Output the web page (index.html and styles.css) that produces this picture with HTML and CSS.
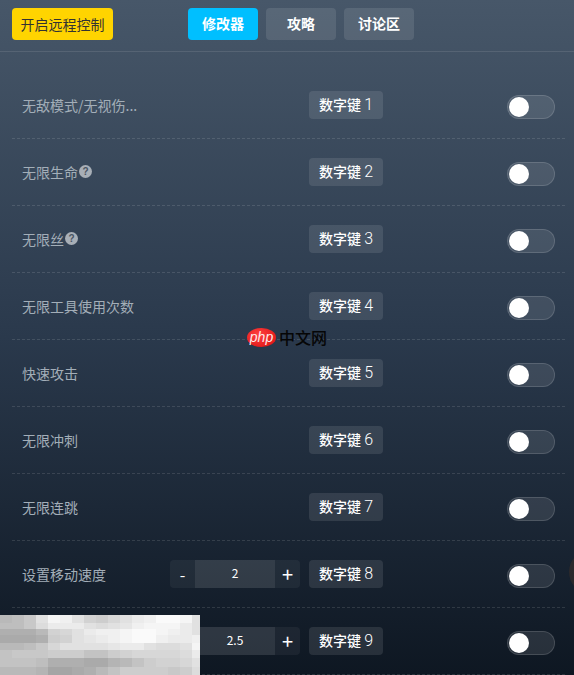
FILE: index.html
```html
<!DOCTYPE html>
<html lang="zh-CN">
  <head>
    <meta charset="UTF-8" />
    <meta name="viewport" content="width=device-width, initial-scale=1.0" />
    <title>修改器</title>
    <link rel="stylesheet" href="styles.css">
  </head>
  <body>
    <div id="page">
      <header class="top-bar">
        <button class="remote-btn">开启远程控制</button>
        <nav class="tabs">
          <a class="tab active">修改器</a>
          <a class="tab">攻略</a>
          <a class="tab">讨论区</a>
        </nav>
      </header>

      <div class="cheat-list">
        <div class="cheat-row">
          <span class="cheat-name">无敌模式/无视伤...</span>
          <span class="hotkey">数字键 <b>1</b></span>
          <span class="switch"><i></i></span>
        </div>
        <div class="cheat-row">
          <span class="cheat-name">无限生命<i class="help">?</i></span>
          <span class="hotkey">数字键 <b>2</b></span>
          <span class="switch"><i></i></span>
        </div>
        <div class="cheat-row">
          <span class="cheat-name">无限丝<i class="help">?</i></span>
          <span class="hotkey">数字键 <b>3</b></span>
          <span class="switch"><i></i></span>
        </div>
        <div class="cheat-row">
          <span class="cheat-name">无限工具使用次数</span>
          <span class="hotkey">数字键 <b>4</b></span>
          <span class="switch"><i></i></span>
        </div>
        <div class="cheat-row">
          <span class="cheat-name">快速攻击</span>
          <span class="hotkey">数字键 <b>5</b></span>
          <span class="switch"><i></i></span>
        </div>
        <div class="cheat-row">
          <span class="cheat-name">无限冲刺</span>
          <span class="hotkey">数字键 <b>6</b></span>
          <span class="switch"><i></i></span>
        </div>
        <div class="cheat-row">
          <span class="cheat-name">无限连跳</span>
          <span class="hotkey">数字键 <b>7</b></span>
          <span class="switch"><i></i></span>
        </div>
        <div class="cheat-row">
          <span class="cheat-name">设置移动速度</span>
          <div class="stepper">
            <span class="step">-</span>
            <span class="step-value">2</span>
            <span class="step plus">+</span>
          </div>
          <span class="hotkey">数字键 <b>8</b></span>
          <span class="switch"><i></i></span>
        </div>
        <div class="cheat-row">
          <span class="cheat-name"></span>
          <div class="stepper">
            <span class="step">-</span>
            <span class="step-value">2.5</span>
            <span class="step plus">+</span>
          </div>
          <span class="hotkey">数字键 <b>9</b></span>
          <span class="switch"><i></i></span>
        </div>
      </div>

      <!-- things lying over the page -->
      <div class="watermark"><span class="php-badge">php</span><span class="watermark-text">中文网</span></div>
      <div class="edge-blob"></div>
      <svg class="mosaic" width="200" height="60" viewBox="0 0 200 60" shape-rendering="crispEdges">
        <g transform="translate(0 0)">
          <rect x="0" width="12" height="8" fill="#b9b9b9"/><rect x="12" width="12" height="8" fill="#bebebe"/><rect x="24" width="12" height="8" fill="#c8c8c8"/><rect x="36" width="12" height="8" fill="#e1e1e1"/><rect x="48" width="12" height="8" fill="#f5f5f5"/><rect x="60" width="12" height="8" fill="#f0f0f0"/><rect x="72" width="12" height="8" fill="#e1e1e1"/><rect x="84" width="12" height="8" fill="#d2d2d2"/><rect x="96" width="12" height="8" fill="#cdcdcd"/><rect x="108" width="12" height="8" fill="#d7d7d7"/><rect x="120" width="12" height="8" fill="#e1e1e1"/><rect x="132" width="12" height="8" fill="#ebebeb"/><rect x="144" width="12" height="8" fill="#f0f0f0"/><rect x="156" width="12" height="8" fill="#fafafa"/><rect x="168" width="12" height="8" fill="#fafafa"/><rect x="180" width="12" height="8" fill="#f5f5f5"/><rect x="192" width="8" height="8" fill="#e1e1e1"/>
        </g>
        <g transform="translate(0 8)">
          <rect x="0" width="12" height="6" fill="#bebebe"/><rect x="12" width="12" height="6" fill="#bebebe"/><rect x="24" width="12" height="6" fill="#c8c8c8"/><rect x="36" width="12" height="6" fill="#dcdcdc"/><rect x="48" width="12" height="6" fill="#ebebeb"/><rect x="60" width="12" height="6" fill="#ebebeb"/><rect x="72" width="12" height="6" fill="#ebebeb"/><rect x="84" width="12" height="6" fill="#e1e1e1"/><rect x="96" width="12" height="6" fill="#dcdcdc"/><rect x="108" width="12" height="6" fill="#e1e1e1"/><rect x="120" width="12" height="6" fill="#e6e6e6"/><rect x="132" width="12" height="6" fill="#f0f0f0"/><rect x="144" width="12" height="6" fill="#f5f5f5"/><rect x="156" width="12" height="6" fill="#f5f5f5"/><rect x="168" width="12" height="6" fill="#f5f5f5"/><rect x="180" width="12" height="6" fill="#ebebeb"/><rect x="192" width="8" height="6" fill="#e1e1e1"/>
        </g>
        <g transform="translate(0 14)">
          <rect x="0" width="12" height="6" fill="#afafaf"/><rect x="12" width="12" height="6" fill="#afafaf"/><rect x="24" width="12" height="6" fill="#afafaf"/><rect x="36" width="12" height="6" fill="#b9b9b9"/><rect x="48" width="12" height="6" fill="#d2d2d2"/><rect x="60" width="12" height="6" fill="#d7d7d7"/><rect x="72" width="12" height="6" fill="#e1e1e1"/><rect x="84" width="12" height="6" fill="#ebebeb"/><rect x="96" width="12" height="6" fill="#f0f0f0"/><rect x="108" width="12" height="6" fill="#f0f0f0"/><rect x="120" width="12" height="6" fill="#f5f5f5"/><rect x="132" width="12" height="6" fill="#fafafa"/><rect x="144" width="12" height="6" fill="#fafafa"/><rect x="156" width="12" height="6" fill="#f5f5f5"/><rect x="168" width="12" height="6" fill="#f0f0f0"/><rect x="180" width="12" height="6" fill="#ebebeb"/><rect x="192" width="8" height="6" fill="#e1e1e1"/>
        </g>
        <g transform="translate(0 20)">
          <rect x="0" width="12" height="8" fill="#aaaaaa"/><rect x="12" width="12" height="8" fill="#aaaaaa"/><rect x="24" width="12" height="8" fill="#aaaaaa"/><rect x="36" width="12" height="8" fill="#afafaf"/><rect x="48" width="12" height="8" fill="#cdcdcd"/><rect x="60" width="12" height="8" fill="#d2d2d2"/><rect x="72" width="12" height="8" fill="#e1e1e1"/><rect x="84" width="12" height="8" fill="#e6e6e6"/><rect x="96" width="12" height="8" fill="#ebebeb"/><rect x="108" width="12" height="8" fill="#f0f0f0"/><rect x="120" width="12" height="8" fill="#f5f5f5"/><rect x="132" width="12" height="8" fill="#fafafa"/><rect x="144" width="12" height="8" fill="#fafafa"/><rect x="156" width="12" height="8" fill="#f0f0f0"/><rect x="168" width="12" height="8" fill="#ebebeb"/><rect x="180" width="12" height="8" fill="#ebebeb"/><rect x="192" width="8" height="8" fill="#f0f0f0"/>
        </g>
        <g transform="translate(0 28)">
          <rect x="0" width="12" height="7" fill="#b9b9b9"/><rect x="12" width="12" height="7" fill="#b9b9b9"/><rect x="24" width="12" height="7" fill="#bebebe"/><rect x="36" width="12" height="7" fill="#c8c8c8"/><rect x="48" width="12" height="7" fill="#d7d7d7"/><rect x="60" width="12" height="7" fill="#e1e1e1"/><rect x="72" width="12" height="7" fill="#e1e1e1"/><rect x="84" width="12" height="7" fill="#e1e1e1"/><rect x="96" width="12" height="7" fill="#e1e1e1"/><rect x="108" width="12" height="7" fill="#e6e6e6"/><rect x="120" width="12" height="7" fill="#ebebeb"/><rect x="132" width="12" height="7" fill="#ebebeb"/><rect x="144" width="12" height="7" fill="#e1e1e1"/><rect x="156" width="12" height="7" fill="#dcdcdc"/><rect x="168" width="12" height="7" fill="#dcdcdc"/><rect x="180" width="12" height="7" fill="#e1e1e1"/><rect x="192" width="8" height="7" fill="#f5f5f5"/>
        </g>
        <g transform="translate(0 35)">
          <rect x="0" width="12" height="8" fill="#c3c3c3"/><rect x="12" width="12" height="8" fill="#c8c8c8"/><rect x="24" width="12" height="8" fill="#c8c8c8"/><rect x="36" width="12" height="8" fill="#c8c8c8"/><rect x="48" width="12" height="8" fill="#cdcdcd"/><rect x="60" width="12" height="8" fill="#cdcdcd"/><rect x="72" width="12" height="8" fill="#cdcdcd"/><rect x="84" width="12" height="8" fill="#c3c3c3"/><rect x="96" width="12" height="8" fill="#c3c3c3"/><rect x="108" width="12" height="8" fill="#cdcdcd"/><rect x="120" width="12" height="8" fill="#d2d2d2"/><rect x="132" width="12" height="8" fill="#d7d7d7"/><rect x="144" width="12" height="8" fill="#d7d7d7"/><rect x="156" width="12" height="8" fill="#d7d7d7"/><rect x="168" width="12" height="8" fill="#d7d7d7"/><rect x="180" width="12" height="8" fill="#dcdcdc"/><rect x="192" width="8" height="8" fill="#ebebeb"/>
        </g>
        <g transform="translate(0 43)">
          <rect x="0" width="12" height="9" fill="#c3c3c3"/><rect x="12" width="12" height="9" fill="#c3c3c3"/><rect x="24" width="12" height="9" fill="#c3c3c3"/><rect x="36" width="12" height="9" fill="#bebebe"/><rect x="48" width="12" height="9" fill="#afafaf"/><rect x="60" width="12" height="9" fill="#afafaf"/><rect x="72" width="12" height="9" fill="#afafaf"/><rect x="84" width="12" height="9" fill="#aaaaaa"/><rect x="96" width="12" height="9" fill="#aaaaaa"/><rect x="108" width="12" height="9" fill="#b4b4b4"/><rect x="120" width="12" height="9" fill="#b9b9b9"/><rect x="132" width="12" height="9" fill="#c3c3c3"/><rect x="144" width="12" height="9" fill="#cdcdcd"/><rect x="156" width="12" height="9" fill="#d2d2d2"/><rect x="168" width="12" height="9" fill="#d2d2d2"/><rect x="180" width="12" height="9" fill="#d7d7d7"/><rect x="192" width="8" height="9" fill="#e1e1e1"/>
        </g>
        <g transform="translate(0 52)">
          <rect x="0" width="12" height="8" fill="#b9b9b9"/><rect x="12" width="12" height="8" fill="#b9b9b9"/><rect x="24" width="12" height="8" fill="#b9b9b9"/><rect x="36" width="12" height="8" fill="#b4b4b4"/><rect x="48" width="12" height="8" fill="#a5a5a5"/><rect x="60" width="12" height="8" fill="#a5a5a5"/><rect x="72" width="12" height="8" fill="#aaaaaa"/><rect x="84" width="12" height="8" fill="#afafaf"/><rect x="96" width="12" height="8" fill="#b9b9b9"/><rect x="108" width="12" height="8" fill="#c3c3c3"/><rect x="120" width="12" height="8" fill="#cdcdcd"/><rect x="132" width="12" height="8" fill="#cdcdcd"/><rect x="144" width="12" height="8" fill="#cdcdcd"/><rect x="156" width="12" height="8" fill="#cdcdcd"/><rect x="168" width="12" height="8" fill="#c8c8c8"/><rect x="180" width="12" height="8" fill="#cdcdcd"/><rect x="192" width="8" height="8" fill="#dcdcdc"/>
        </g>
      </svg>
    </div>
  </body>
</html>
```

FILE: styles.css
```css
html,
body {
  margin: 0;
  padding: 0;
}
body {
  font: normal 14px/20px "Noto Sans CJK SC", "Liberation Sans", sans-serif;
  color: #fff;
}
#page {
  position: relative;
  width: 574px;
  height: 675px;
  overflow: hidden;
  background: linear-gradient(180deg, #475769 0%, #2a394c 50%, #0e1722 100%);
}

/* Top bar */
.top-bar {
  display: flex;
  height: 52px;
  padding: 8px 12px 0;
  box-sizing: border-box;
  border-bottom: 1px solid rgba(255, 255, 255, 0.1);
}
.remote-btn {
  width: 101px;
  height: 32px;
  padding: 0;
  border: 0;
  border-radius: 4px;
  background: #ffd400;
  color: #333;
  font: inherit;
}
.tabs {
  display: flex;
  gap: 8px;
  margin-left: 75px;
}
.tab {
  width: 70px;
  height: 32px;
  border-radius: 4px;
  background: rgba(255, 255, 255, 0.1);
  font-weight: bold;
  line-height: 31px;
  text-align: center;
}
.tab.active {
  background: #00bfff;
}

/* List */
.cheat-list {
  margin: 20px 9px 0 12px;
}
.cheat-row {
  display: grid;
  grid-template-columns: 148px 139px 74px 1fr;
  align-items: center;
  height: 67px;
  box-sizing: border-box;
  padding: 0 10px;
  border-bottom: 1px dashed rgba(255, 255, 255, 0.12);
}
.cheat-name {
  grid-column: 1;
  display: flex;
  align-items: center;
  margin-top: -1px;
  color: #a3aeb8;
  white-space: nowrap;
}
.help {
  width: 13px;
  height: 13px;
  margin-left: 1px;
  border-radius: 50%;
  background: #a8afb7;
  color: #4a5563;
  font: bold 10px/13px "Liberation Sans", sans-serif;
  text-align: center;
}
.hotkey {
  grid-column: 3;
  height: 28px;
  border-radius: 4px;
  background: rgba(255, 255, 255, 0.1);
  font-weight: 500;
  line-height: 27px;
  text-align: center;
  white-space: nowrap;
}
.hotkey b {
  font: 300 16px/27px Roboto, sans-serif;
}
.switch {
  grid-column: 4;
  justify-self: end;
  display: flex;
  align-items: center;
  width: 48px;
  height: 24px;
  margin-top: 4px;
  box-sizing: border-box;
  padding-left: 1px;
  border: 1px solid rgba(255, 255, 255, 0.14);
  border-radius: 12px;
  background: rgba(255, 255, 255, 0.1);
}
.switch i {
  width: 20px;
  height: 20px;
  border-radius: 50%;
  background: #fff;
}

/* Number stepper */
.stepper {
  grid-column: 2;
  display: flex;
  width: 130px;
  height: 28px;
  border-radius: 4px;
  overflow: hidden;
  background: rgba(255, 255, 255, 0.05);
  line-height: 28px;
  text-align: center;
}
.step {
  width: 25px;
  font-size: 16px;
}
.step.plus {
  font-size: 20px;
}
.step-value {
  width: 80px;
  background: rgba(255, 255, 255, 0.08);
  font-size: 12px;
  line-height: 26px;
}

/* Overlays */
.watermark {
  position: absolute;
  left: 247px;
  top: 327px;
  display: flex;
  align-items: center;
  gap: 3px;
}
.php-badge {
  width: 29px;
  height: 19px;
  border-radius: 50%;
  background: radial-gradient(ellipse at 40% 35%, #ff4040, #e31a1a 75%);
  color: #ffe9e9;
  font: italic 14px/18px "Liberation Sans", sans-serif;
  text-align: center;
}
.watermark-text {
  color: #060606;
  font-size: 16px;
  font-weight: 500;
  line-height: 20px;
}
.edge-blob {
  position: absolute;
  left: 569px;
  top: 550px;
  width: 44px;
  height: 44px;
  border-radius: 50%;
  background: rgba(60, 48, 42, 0.55);
}
.mosaic {
  position: absolute;
  left: 0;
  top: 615px;
}
```
